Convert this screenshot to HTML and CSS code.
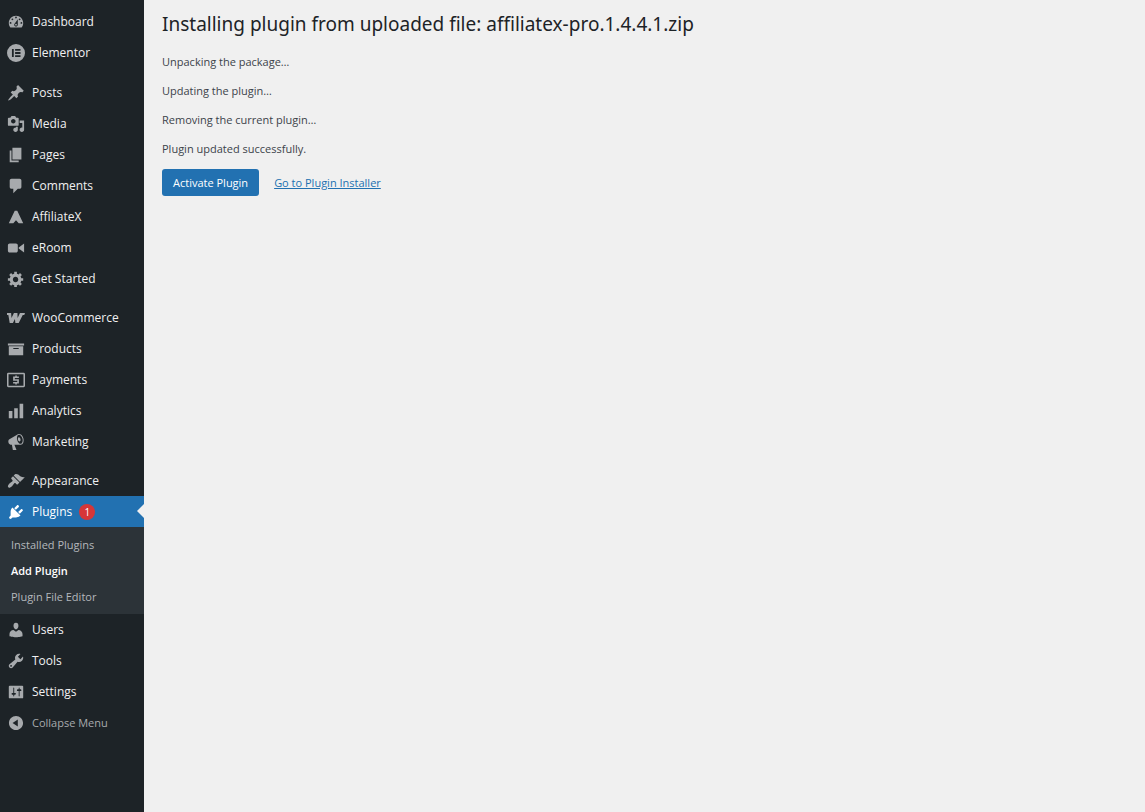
FILE: index.html
```html
<!DOCTYPE html>
<html lang="en">
<head>
<meta charset="utf-8">
<title>Installing plugin</title>
<link rel="stylesheet" href="styles.css">
</head>
<body>
<nav class="sidebar" aria-label="Main menu">
  <ul class="group">
    <li><a class="item" href="#"><svg class="icon" viewBox="0 0 20 20"><path d="M3.76 16h12.48c1.1-1.37 1.76-3.11 1.76-5 0-4.42-3.58-8-8-8s-8 3.58-8 8c0 1.89.66 3.63 1.76 5zM10 4c.55 0 1 .45 1 1s-.45 1-1 1-1-.45-1-1 .45-1 1-1zM6 6c.55 0 1 .45 1 1s-.45 1-1 1-1-.45-1-1 .45-1 1-1zm8 0c.55 0 1 .45 1 1s-.45 1-1 1-1-.45-1-1 .45-1 1-1zm-5.37 5.55L12 7v6c0 1.1-.9 2-2 2s-2-.9-2-2c0-.57.24-1.08.63-1.45zM4 10c.55 0 1 .45 1 1s-.45 1-1 1-1-.45-1-1 .45-1 1-1zm12 0c.55 0 1 .45 1 1s-.45 1-1 1-1-.45-1-1 .45-1 1-1zm-5 3c0-.55-.45-1-1-1s-1 .45-1 1 .45 1 1 1 1-.45 1-1z"/></svg>Dashboard</a></li>
    <li><a class="item" href="#"><svg class="icon" viewBox="0 0 20 20"><path fill-rule="evenodd" d="M10 0a10 10 0 1 0 0 20 10 10 0 0 0 0-20zM5.500 5.500h2v9h-2zM9 5.500h6v2H9zM9 9h6v2H9zM9 12.500h6v2H9z"/></svg>Elementor</a></li>
  </ul>
  <ul class="group">
    <li><a class="item" href="#"><svg class="icon" viewBox="0 0 20 20"><path d="M10.44 3.02l1.82-1.82 6.36 6.35-1.83 1.82c-1.05-.68-2.48-.57-3.41.36l-.75.75c-.92.93-1.04 2.35-.35 3.41l-1.83 1.82-2.41-2.41-2.8 2.79c-.42.42-3.38 2.71-3.8 2.29s1.86-3.39 2.28-3.81l2.79-2.79L4.1 9.36l1.83-1.82c1.05.69 2.48.57 3.4-.36l.75-.75c.93-.92 1.05-2.35.36-3.41z"/></svg>Posts</a></li>
    <li><a class="item" href="#"><svg class="icon" viewBox="0 0 20 20"><path d="M13 11V4c0-.55-.45-1-1-1h-1.67L9 1H5L3.67 3H2c-.55 0-1 .45-1 1v7c0 .55.45 1 1 1h10c.55 0 1-.45 1-1zM7 4.5c1.38 0 2.5 1.12 2.5 2.5S8.38 9.5 7 9.5 4.5 8.38 4.5 7 5.62 4.5 7 4.5zM14 6h5v10.5c0 1.38-1.12 2.5-2.5 2.5S14 17.88 14 16.5s1.12-2.5 2.5-2.5c.17 0 .34.02.5.05V9h-3V6zm-4 8.05V13h2v3.5c0 1.38-1.12 2.5-2.5 2.5S7 17.88 7 16.5 8.12 14 9.5 14c.17 0 .34.02.5.05z"/></svg>Media</a></li>
    <li><a class="item" href="#"><svg class="icon" viewBox="0 0 20 20"><path d="M6 15V2h10v13H6zm-1 1h8v2H3V5h2v11z"/></svg>Pages</a></li>
    <li><a class="item" href="#"><svg class="icon" viewBox="0 0 20 20"><path d="M5 2h9c1.1 0 2 .9 2 2v7c0 1.1-.9 2-2 2h-2l-5 5v-5H5c-1.1 0-2-.9-2-2V4c0-1.1.9-2 2-2z"/></svg>Comments</a></li>
    <li><a class="item" href="#"><svg class="icon" viewBox="0 0 20 20"><path d="M8.600 3h2.800L18 17h-5L10 13.500 7 17H2z"/></svg>AffiliateX</a></li>
    <li><a class="item" href="#"><svg class="icon" viewBox="0 0 20 20"><path d="M12 13V7c0-1.1-.9-2-2-2H3c-1.1 0-2 .9-2 2v6c0 1.1.9 2 2 2h7c1.1 0 2-.9 2-2zm1-2.5l6 4.5V5l-6 4.5v1z"/></svg>eRoom</a></li>
    <li><a class="item" href="#"><svg class="icon" viewBox="0 0 20 20"><path d="M18 12h-2.18c-.17.7-.44 1.35-.81 1.93l1.54 1.54-2.1 2.1-1.54-1.54c-.58.36-1.23.63-1.91.79V19H8v-2.18c-.68-.16-1.33-.43-1.91-.79l-1.54 1.54-2.12-2.12 1.54-1.54c-.36-.58-.63-1.23-.79-1.91H1V9.03h2.17c.16-.7.44-1.35.8-1.94L2.43 5.55l2.1-2.1 1.54 1.54c.58-.37 1.24-.64 1.93-.81V2h3v2.18c.68.16 1.33.43 1.91.79l1.54-1.54 2.12 2.12-1.54 1.54c.36.59.64 1.24.8 1.94H18V12zm-8.5 1.5c1.66 0 3-1.34 3-3s-1.34-3-3-3-3 1.34-3 3 1.34 3 3 3z"/></svg>Get Started</a></li>
  </ul>
  <ul class="group group-close">
    <li><a class="item" href="#"><svg class="icon" viewBox="0 0 20 20"><path d="M0 4.500h4.600l.4 5.500L7.700 4.500h3.900l.2 5.500L14.400 4.500H20l-.8 2.200h-1.700L13 15.500H9.300L8.800 11 6.600 15.500H3L1.500 6.700H0z"/></svg>WooCommerce</a></li>
    <li><a class="item" href="#"><svg class="icon" viewBox="0 0 20 20"><path d="M19 4v2H1V4h18zM2 7h16v10H2V7zm11 3V9H7v1h6z"/></svg>Products</a></li>
    <li><a class="item" href="#"><svg class="icon" viewBox="0 0 20 20"><path fill-rule="evenodd" d="M1.500 2h17A1.500 1.500 0 0 1 20 3.500v13a1.500 1.500 0 0 1-1.500 1.500h-17A1.500 1.500 0 0 1 0 16.500v-13A1.500 1.500 0 0 1 1.500 2zM1.700 3.700v12.600h16.600V3.700z"/><path d="M9.200 5h1.700v1.200h2.300v1.700H8.700v1.300h4.500v4.600h-2.300V15H9.200v-1.200H6.800v-1.700h4.600v-1.200H6.800V6.200h2.400z"/></svg>Payments</a></li>
    <li><a class="item" href="#"><svg class="icon" viewBox="0 0 20 20"><path d="M18 18V2h-4v16h4zm-6 0V7H8v11h4zm-6 0v-8H2v8h4z"/></svg>Analytics</a></li>
    <li><a class="item" href="#"><svg class="icon" viewBox="0 0 20 20"><path d="M18.15 5.94c.46 1.62.38 3.22-.02 4.48-.42 1.28-1.26 2.18-2.3 2.48-.16.06-.26.06-.4.06-.06.02-.12.02-.18.02-.06.02-.14.02-.22.02h-6.8l2.22 5.5c.02.14-.06.26-.14.34-.08.1-.24.16-.34.16H6.95c-.1 0-.26-.06-.34-.16-.08-.08-.16-.2-.14-.34l-1-5.5H4.25l-.02-.02c-.5.06-1.08-.18-1.54-.62s-.88-1.08-1.06-1.88c-.24-.8-.2-1.56-.02-2.2.18-.62.58-1.08 1.06-1.3l.02-.02 9-5.4c.1-.06.18-.1.24-.16.06-.04.14-.08.24-.12.16-.08.28-.12.5-.18 1.04-.3 2.24.1 3.22.98s1.84 2.24 2.26 3.86zm-2.58 5.98h-.02c.4-.1.74-.34 1.04-.7.58-.7.86-1.76.86-3.04 0-.64-.1-1.3-.28-1.98-.34-1.36-1.02-2.5-1.78-3.24s-1.68-1.1-2.46-.88c-.82.22-1.4.96-1.7 2-.32 1.04-.28 2.36.06 3.72.38 1.36 1 2.5 1.8 3.24.78.74 1.62 1.1 2.48.88zm-2.54-7.08c.22-.04.42-.02.62.04.38.16.76.48 1.02 1s.42 1.2.42 1.78c0 .3-.04.56-.12.8-.18.48-.44.84-.86.94-.34.1-.8-.06-1.14-.4s-.64-.86-.78-1.5c-.18-.62-.12-1.24.02-1.72s.48-.84.82-.94z"/></svg>Marketing</a></li>
  </ul>
  <ul class="group group-close">
    <li><a class="item" href="#"><svg class="icon" viewBox="0 0 20 20"><path d="M14.48 11.06L7.41 3.99l1.5-1.5c.5-.56 2.3-.47 3.51.32 1.21.8 1.43 1.28 2.91 2.1 1.18.64 2.45 1.26 4.45.85zm-.71.71L6.7 4.7 4.93 6.47c-.39.39-.39 1.02 0 1.41l1.06 1.06c.39.39.39 1.03 0 1.42-.6.6-1.43 1.11-2.21 1.69-.35.26-.7.53-1.01.84C1.43 14.23.4 16.08 1.4 17.07c.99 1 2.84-.03 4.18-1.36.31-.31.58-.66.85-1.02.57-.78 1.08-1.61 1.69-2.21.39-.39 1.02-.39 1.41 0l1.06 1.06c.39.39 1.02.39 1.41 0z"/></svg>Appearance</a></li>
    <li>
      <a class="item item-current" href="#"><svg class="icon" viewBox="0 0 20 20"><path d="M13.11 4.36L9.87 7.6 8 5.73l3.24-3.24c.35-.34 1.05-.2 1.56.32.52.51.66 1.21.31 1.55zm-8 1.77l.91-1.12 9.01 9.01-1.19.84c-.71.71-2.63 1.16-3.82 1.16H6.14L4.9 17.26c-.59.59-1.54.59-2.12 0-.59-.58-.59-1.53 0-2.12l1.24-1.24v-3.88c0-1.13.4-3.19 1.09-3.89zm7.26 3.97l3.24-3.24c.34-.35 1.04-.21 1.55.31.52.51.66 1.21.31 1.55l-3.24 3.25z"/></svg>Plugins<span class="count">1</span></a>
      <ul class="submenu">
        <li><a class="sub" href="#">Installed Plugins</a></li>
        <li><a class="sub sub-current" href="#" aria-current="page">Add Plugin</a></li>
        <li><a class="sub" href="#">Plugin File Editor</a></li>
      </ul>
    </li>
    <li><a class="item" href="#"><svg class="icon" viewBox="0 0 20 20"><path d="M10 9.25c-2.27 0-2.73-3.44-2.73-3.44C7 4.02 7.82 2 9.97 2c2.16 0 2.98 2.02 2.71 3.81 0 0-.41 3.44-2.68 3.44zm0 2.57L12.72 10c2.39 0 4.52 2.33 4.52 4.53v2.49s-3.65 1.13-7.24 1.13c-3.65 0-7.24-1.13-7.24-1.13v-2.49c0-2.25 1.94-4.48 4.47-4.48z"/></svg>Users</a></li>
    <li><a class="item" href="#"><svg class="icon" viewBox="0 0 20 20"><path d="M16.68 9.77c-1.34 1.34-3.3 1.67-4.95.99l-5.41 6.52c-.99.99-2.59.99-3.58 0s-.99-2.59 0-3.57l6.52-5.42c-.68-1.65-.35-3.61.99-4.95 1.28-1.28 3.12-1.62 4.72-1.06l-2.89 2.89 2.82 2.82 2.86-2.87c.53 1.58.18 3.39-1.08 4.65zM3.81 16.21c.4.39 1.04.39 1.43 0 .4-.4.4-1.04 0-1.43-.39-.4-1.03-.4-1.43 0-.39.39-.39 1.03 0 1.43z"/></svg>Tools</a></li>
    <li><a class="item" href="#"><svg class="icon" viewBox="0 0 20 20"><path d="M18 16V4c0-.55-.45-1-1-1H3c-.55 0-1 .45-1 1v12c0 .55.45 1 1 1h14c.55 0 1-.45 1-1zM8 11h1c.55 0 1 .45 1 1s-.45 1-1 1H8v1.5c0 .28-.22.5-.5.5s-.5-.22-.5-.5V13H6c-.55 0-1-.45-1-1s.45-1 1-1h1V5.5c0-.28.22-.5.5-.5s.5.22.5.5V11zm5-2h-1c-.55 0-1-.45-1-1s.45-1 1-1h1V5.5c0-.28.22-.5.5-.5s.5.22.5.5V7h1c.55 0 1 .45 1 1s-.45 1-1 1h-1v5.5c0 .28-.22.5-.5.5s-.5-.22-.5-.5V9z"/></svg>Settings</a></li>
    <li><button class="item collapse" type="button"><svg class="icon" viewBox="0 0 20 20"><path d="M10 2.16c4.33 0 7.84 3.51 7.84 7.84s-3.51 7.84-7.84 7.84S2.16 14.33 2.16 10 5.71 2.16 10 2.16zm2 11.72V6.12L6.18 9.97z"/></svg>Collapse Menu</button></li>
  </ul>
</nav>
<main class="content">
  <h1 class="title">Installing plugin from uploaded file: affiliatex-pro.1.4.4.1.zip</h1>
  <p class="step">Unpacking the package…</p>
  <p class="step">Updating the plugin…</p>
  <p class="step">Removing the current plugin…</p>
  <p class="step">Plugin updated successfully.</p>
  <div class="actions">
    <button class="primary" type="button">Activate Plugin</button>
    <a class="link" href="#">Go to Plugin Installer</a>
  </div>
</main>
</body>
</html>
```
FILE: styles.css
```css
* {
  box-sizing: border-box;
}

body {
  display: flex;
  min-height: 100vh;
  margin: 0;
  background: #f0f0f0;
  color: #3c434a;
  font-family: "Open Sans", "Noto Sans", sans-serif;
  font-size: 11px;
}

ul {
  margin: 0;
  padding: 0;
  list-style: none;
}

.sidebar {
  display: flex;
  flex: 0 0 144px;
  flex-direction: column;
  gap: 9px;
  padding-top: 6px;
  background: #1d2327;
}

.group-close {
  margin-top: -1px;
}

.item {
  position: relative;
  display: flex;
  align-items: center;
  gap: 7px;
  width: 100%;
  height: 31px;
  padding: 0 7px;
  border: 0;
  background: none;
  color: #f0f0f1;
  font-family: inherit;
  font-size: 12px;
  text-decoration: none;
}

.icon {
  flex: none;
  width: 18px;
  height: 18px;
  fill: #a7aaad;
}

.item-current {
  background: #2271b1;
  color: #fff;
}

.item-current .icon {
  fill: #fff;
}

.item-current::after {
  content: "";
  position: absolute;
  top: 8px;
  right: 0;
  border: 7px solid transparent;
  border-left-width: 0;
  border-right-color: #f0f0f0;
}

.count {
  width: 16px;
  height: 16px;
  border-radius: 8px;
  background: #d63638;
  font-size: 10px;
  line-height: 16px;
  text-align: center;
}

.submenu {
  padding: 5px 0 4px;
  background: #2c3338;
}

.sub {
  display: block;
  padding: 0 11px;
  color: #b4b8bc;
  line-height: 26px;
  text-decoration: none;
}

.sub-current {
  color: #fff;
  font-weight: 600;
}

.collapse {
  color: #a7aaad;
  font-size: 11px;
}

.content {
  flex: 1;
  min-width: 0;
  padding: 9px 18px;
}

.title {
  margin: 0 0 14px;
  color: #1d2327;
  font-family: "Noto Sans", "Open Sans", sans-serif;
  font-size: 19px;
  font-weight: 400;
  line-height: 30px;
}

.step {
  margin: 0 0 12px;
  line-height: 17px;
}

.actions {
  display: flex;
  align-items: center;
  gap: 15px;
}

.primary {
  height: 27px;
  padding: 0 11px;
  border: 0;
  border-radius: 3px;
  background: #2271b1;
  color: #fff;
  font-family: inherit;
  font-size: 11px;
}

.link {
  color: #2271b1;
}
```
